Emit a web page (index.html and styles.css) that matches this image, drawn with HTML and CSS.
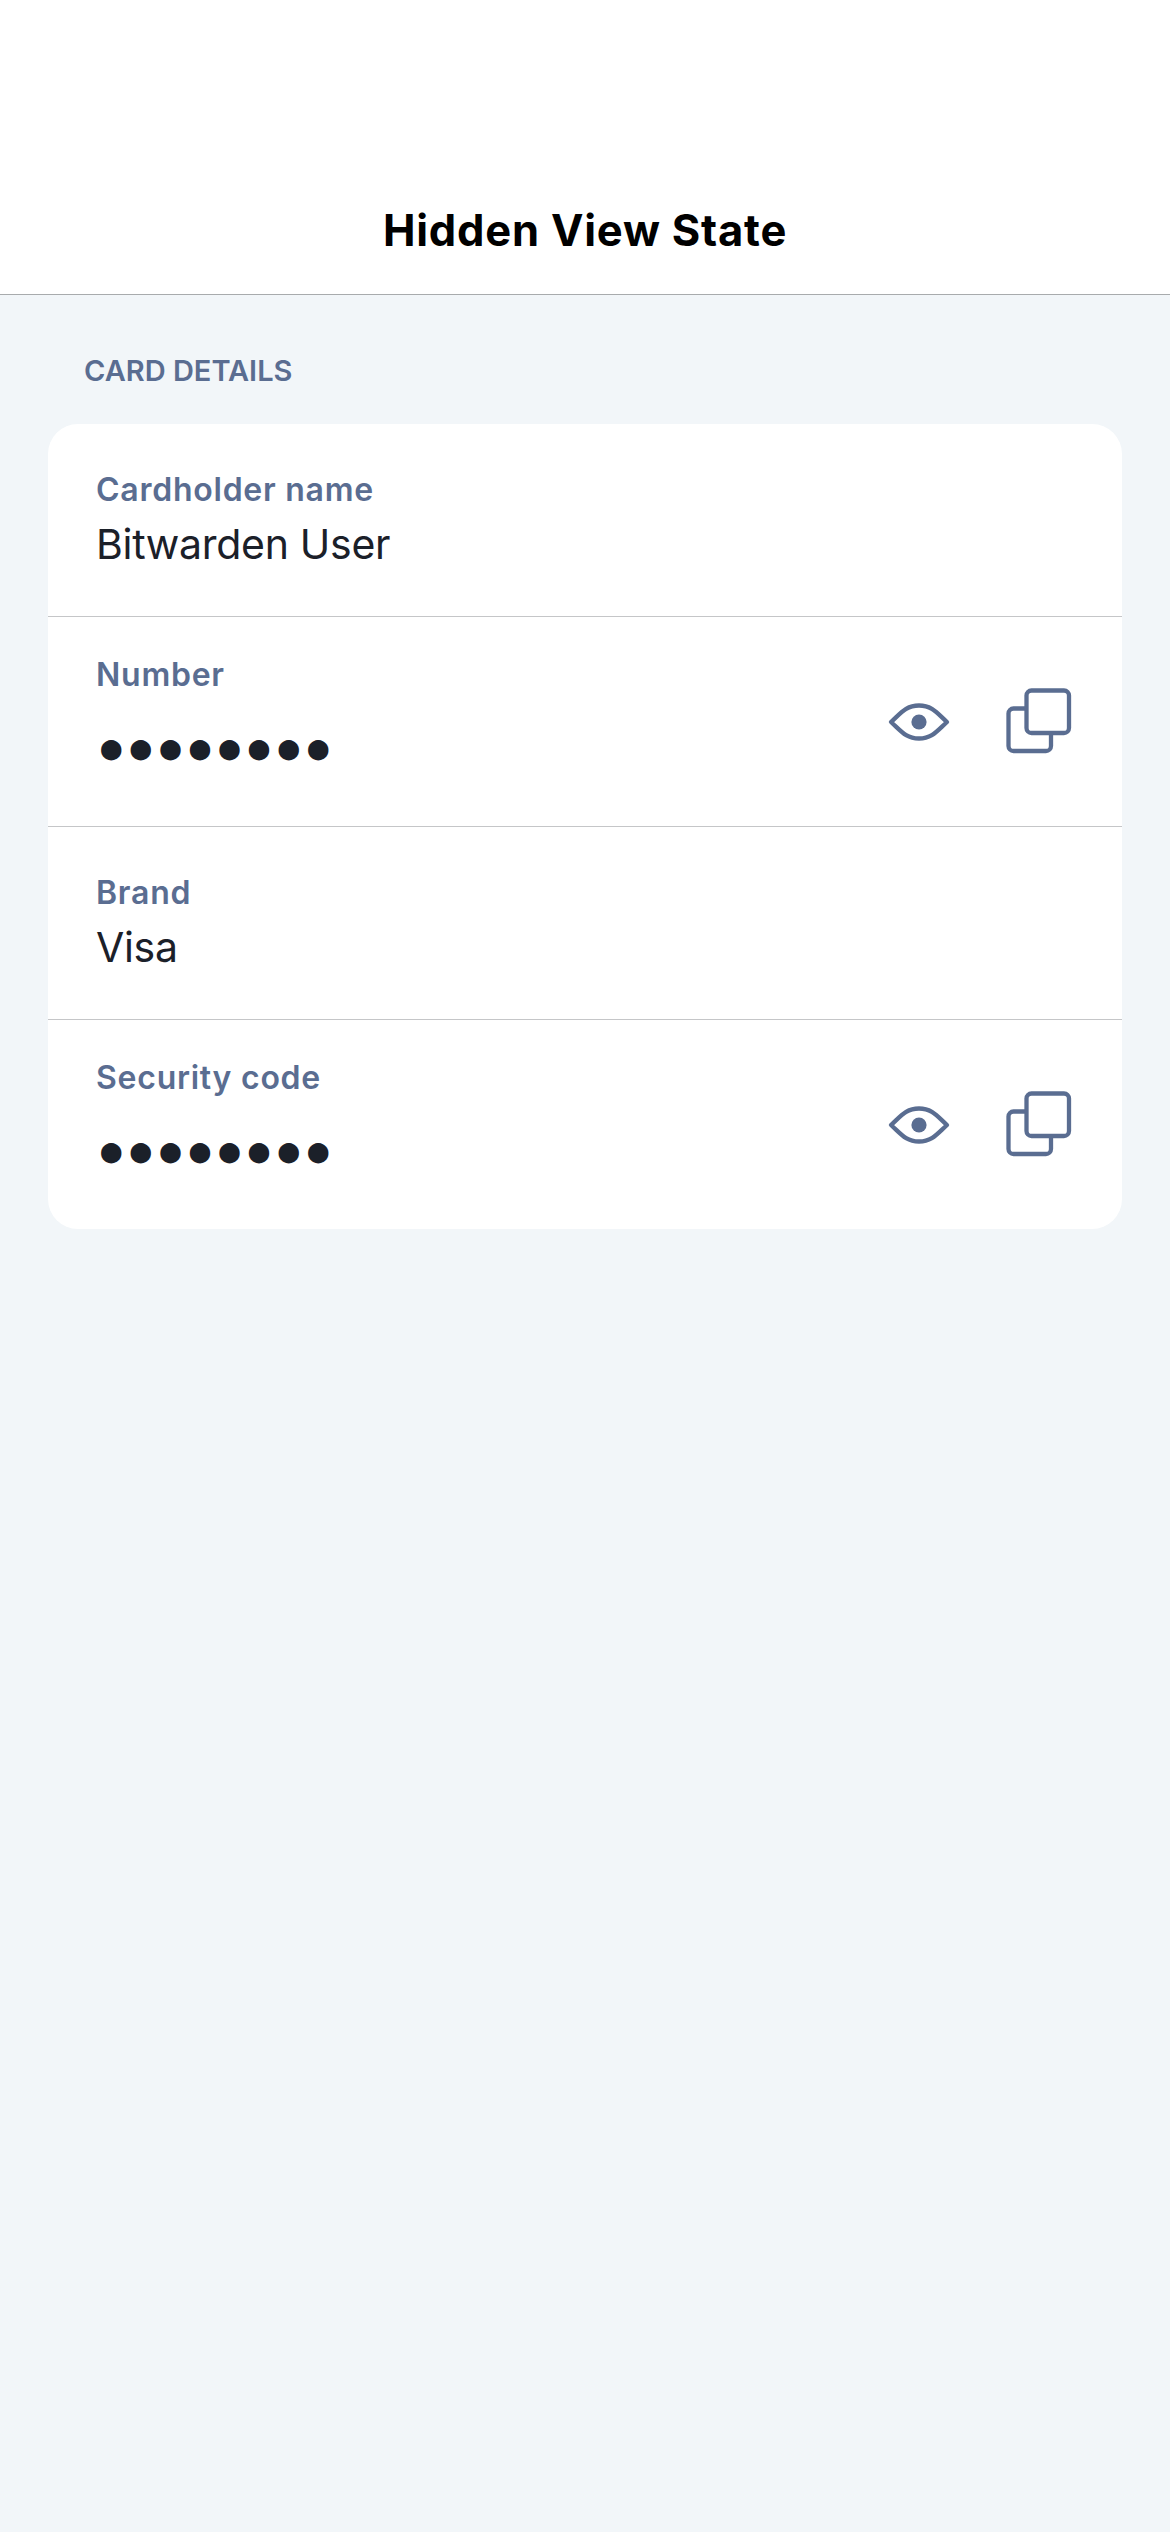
FILE: index.html
```html
<!DOCTYPE html>
<html lang="en">
<head>
<meta charset="utf-8">
<title>Hidden View State</title>
<link rel="stylesheet" href="styles.css">
</head>
<body>
<svg class="sprite" aria-hidden="true">
  <symbol id="eye" viewBox="0 0 64 40">
    <path d="M4 20C14 11 19 3.500 32 3.500S50 11 60 20C50 29 45 36.500 32 36.500S14 29 4 20Z" fill="none" stroke="currentColor" stroke-width="4.300" stroke-linejoin="round"/>
    <circle cx="32" cy="20" r="7.600" fill="currentColor"/>
  </symbol>
  <symbol id="copy" viewBox="0 0 66 66">
    <g fill="none" stroke="currentColor" stroke-width="4.300">
      <rect x="20.500" y="2.500" width="42.500" height="42.500" rx="5"/>
      <path d="M20.500 20.500H7.500a5 5 0 0 0-5 5V58a5 5 0 0 0 5 5H40a5 5 0 0 0 5-5V45"/>
    </g>
  </symbol>
</svg>
<header class="navbar"><h1 class="navbar-title">Hidden View State</h1></header>
<main class="content">
  <h2 class="section-title">CARD DETAILS</h2>
  <section class="card">
    <div class="row">
      <div class="field"><span class="label">Cardholder name</span><span class="value">Bitwarden User</span></div>
    </div>
    <div class="row row-hidden">
      <div class="field"><span class="label">Number</span><span class="mask">●●●●●●●●</span></div>
      <div class="actions"><svg class="eye"><use href="#eye"/></svg><svg class="copy"><use href="#copy"/></svg></div>
    </div>
    <div class="row">
      <div class="field"><span class="label">Brand</span><span class="value">Visa</span></div>
    </div>
    <div class="row row-hidden">
      <div class="field"><span class="label">Security code</span><span class="mask">●●●●●●●●</span></div>
      <div class="actions"><svg class="eye"><use href="#eye"/></svg><svg class="copy"><use href="#copy"/></svg></div>
    </div>
  </section>
</main>
</body>
</html>
```
FILE: styles.css
```css
* { box-sizing: border-box; }
body {
  margin: 0;
  min-height: 2532px;
  background: #f2f6f9;
  color: #1b2029;
  font-family: Inter, "Liberation Sans", sans-serif;
}
.sprite { display: none; }
.navbar {
  height: 295px;
  padding-top: 200px;
  background: #fff;
  border-bottom: 1px solid #a8abad;
  text-align: center;
}
.navbar-title {
  margin: 0;
  color: #000;
  font-size: 43.500px;
  font-weight: 650;
  line-height: 60px;
  letter-spacing: 0.800px;
}
.content { padding: 56px 48px 0; }
.section-title {
  margin: 0 0 33px;
  padding-left: 36px;
  color: #5a6d91;
  font-size: 29px;
  font-weight: 620;
  line-height: 40px;
}
.card {
  border-radius: 30px;
  background: #fff;
  overflow: hidden;
}
.row {
  display: flex;
  justify-content: space-between;
  height: 193px;
  padding: 46px 48px 0;
  border-bottom: 1px solid #c5c6c8;
}
.row-hidden {
  height: 210px;
  padding: 37.500px 50px 0 48px;
}
.row:last-child { height: 209px; border-bottom: 0; }
.field { display: flex; flex-direction: column; gap: 9px; }
.label {
  color: #5a6d91;
  font-size: 32px;
  font-weight: 560;
  line-height: 40px;
  letter-spacing: 0.750px;
}
.value { font-size: 41px; line-height: 50px; letter-spacing: -0.300px; }
.mask {
  margin: 18px 0 0 5px;
  font-family: "DejaVu Sans Mono", monospace;
  font-size: 34px;
  line-height: 50px;
  letter-spacing: 9.100px;
}
.actions {
  display: flex;
  gap: 55px;
  padding-top: 33.500px;
  color: #5a6d91;
}
.eye { width: 64px; height: 40px; margin-top: 13.500px; }
.copy { width: 66px; height: 66px; }
```
